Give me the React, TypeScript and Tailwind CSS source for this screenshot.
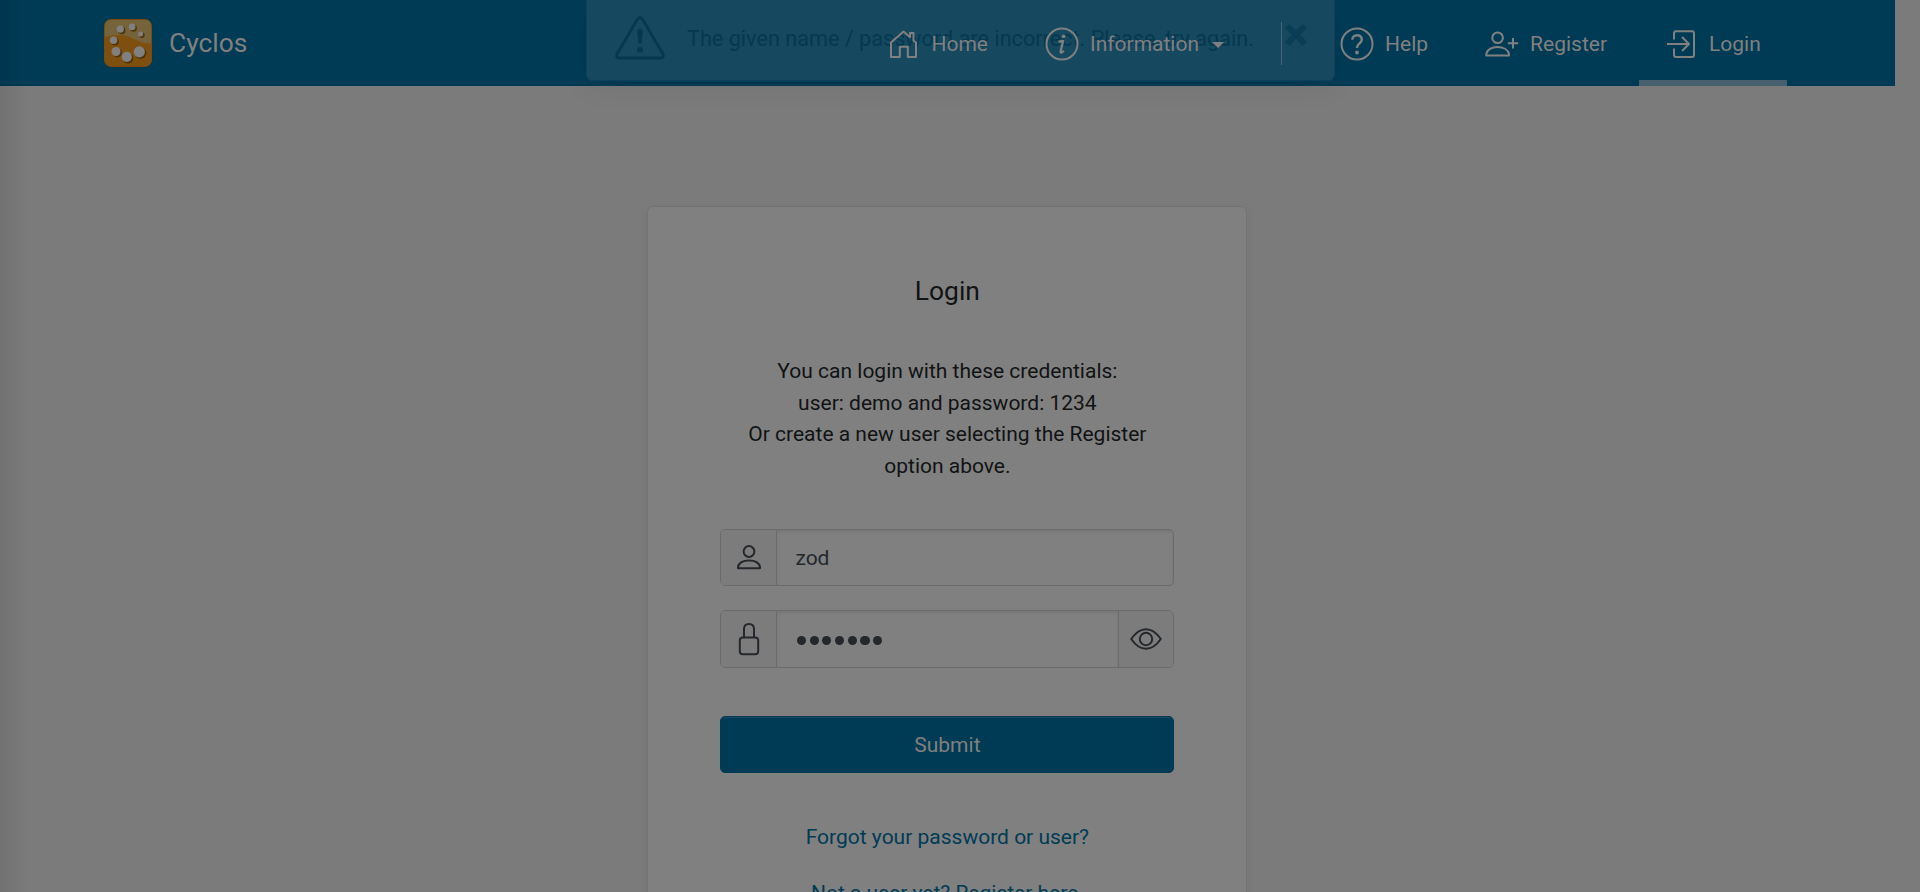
import React from "react";

type IconProps = { className?: string };

function Stroke({ className, children, box = "0 0 34 34" }: IconProps & { children: React.ReactNode; box?: string }) {
  return (
    <svg viewBox={box} className={className} fill="none" stroke="currentColor" strokeWidth="2" strokeLinejoin="round">
      {children}
    </svg>
  );
}

const beads = [
  [16.7, 10.5, 4],
  [28.5, 8.3, 3.7],
  [37, 15.3, 2.9],
  [10, 21.6, 4.1],
  [12.4, 32.9, 4.9],
  [23.2, 38.3, 5.5],
  [35.7, 33.3, 6],
];

const Logo = () => (
  <svg viewBox="0 0 48 48" className="h-12 w-12 shrink-0">
    <rect x="0.5" y="0.5" width="47" height="47" rx="6.5" fill="#7f4f10" stroke="#7f480c" />
    <path d="M1 18V7Q1 1 7 1H41Q47 1 47 7V24.5C33 25 29 16 15 16Q7 16 1 18Z" fill="#75633b" />
    {beads.map(([x, y, r]) => (
      <g key={x}>
        <circle cx={x + 0.9} cy={y + 0.9} r={r - 0.2} fill="#513308" />
        <circle cx={x - 0.4} cy={y - 0.4} r={r - 0.4} fill="#808080" />
      </g>
    ))}
  </svg>
);

export default function App() {
  return (
    <div className="relative flex h-[892px] w-full overflow-hidden bg-[#7b7b7b] font-[Roboto,sans-serif] text-[21px] leading-[31.65px] text-[#111314]">
      <div className="flex w-[1895px] flex-col">
        <header className="relative flex h-[86px] w-full shrink-0 bg-[#003b55] pr-[108px] pl-[104px] text-[#808080]">
          <div className="absolute top-0 left-[586px] flex h-[81px] w-[749px] rounded-b-[6px] border border-t-0 border-[#114159] bg-[#16485f] pt-[14px] pl-[28px] text-[#063850] shadow-[0_8px_28px_rgba(0,0,0,0.06)]">
            <Stroke className="mt-[2px] h-[44px] w-[50px] shrink-0" box="0 0 50 44">
              <path d="M22.6 3Q25 0 27.4 3L48 38Q49 42 46 42H4Q1 42 2 38Z" strokeWidth="2.8" />
              <path d="M22.3 15Q22.5 12.5 25 12.5T27.7 15L26.6 27Q25 29 23.4 27Z" fill="currentColor" stroke="none" />
              <circle cx="25" cy="33.8" r="3" fill="currentColor" stroke="none" />
            </Stroke>
            <span className="mt-[9px] ml-[22px] text-[21.65px] whitespace-nowrap">The given name / password are incorrect. Please, try again.</span>
            <Stroke className="mt-[9px] mr-[26px] ml-auto h-[24px] w-[24px] shrink-0 text-[#0a3d56]" box="0 0 24 24">
              <path d="M3.2 3.2L20.8 20.8M20.8 3.2L3.2 20.8" strokeWidth="6" />
            </Stroke>
          </div>
          <div className="flex items-center gap-[17px]">
            <Logo />
            <span className="pt-[2px] text-[26.4px]">Cyclos</span>
          </div>
          <nav className="relative ml-auto flex h-full items-center">
            <a className="flex h-full items-center gap-[14px] pt-[3px]">
              <Stroke className="-mt-[2px] h-[28px] w-[27px]" box="0 0 27 28">
                <path d="M1 12.5L13.5 1.5L20 7.2V3H23.5V10.5L26 12.5V27H17.8V16.8H9.8V27H1Z" />
              </Stroke>
              Home
            </a>
            <a className="ml-[57px] flex h-full items-center gap-[11px] pt-[3px]">
              <Stroke className="-mt-px h-[34px] w-[34px]">
                <circle cx="17" cy="17" r="15.5" />
                <path d="M13.5 14.7L18.2 13.8L15.6 24.3Q15.3 26 16.5 25.6Q17.6 25.2 18.8 23.8" strokeWidth="2.2" />
                <circle cx="18.6" cy="9.3" r="1.9" fill="currentColor" stroke="none" />
              </Stroke>
              Information
              <span className="ml-[2px] border-x-[6px] border-t-[6px] border-x-transparent" />
            </a>
            <span className="mr-[58px] ml-[57px] h-[43px] w-px bg-[#426579]" />
            <a className="flex h-full items-center gap-[11px] pt-[3px]">
              <Stroke className="-mt-px h-[34px] w-[34px]">
                <circle cx="17" cy="17" r="15.5" />
                <path d="M12.3 12.8C12.3 6.8 21.8 6.8 21.8 12.5C21.8 16.5 17 16.5 17 21" strokeWidth="2.4" />
                <circle cx="17" cy="25.5" r="1.9" fill="currentColor" stroke="none" />
              </Stroke>
              Help
            </a>
            <a className="ml-[57px] flex h-full items-center gap-[11px] pt-[3px]">
              <Stroke className="-mt-px h-[34px] w-[34px]">
                <circle cx="12.6" cy="10.8" r="5.3" />
                <path d="M1.3 28.5V27C2 22.5 7 20 12.5 20S23 22.5 24 27V28.5Z" />
                <path d="M28 11V21.4M22.9 16.2H33.2" />
              </Stroke>
              Register
            </a>
            <a className="ml-[32px] flex h-full w-[148px] items-center gap-[13px] border-b-[6px] border-[#46606d] pt-[9px] pl-[27px]">
              <Stroke className="-mt-[2px] h-[30px] w-[30px]" box="0 0 30 30">
                <path d="M8 10.5V4.3Q8 2.3 10 2.3H26Q28 2.3 28 4.3V26Q28 28 26 28H10Q8 28 8 26V19.5M1 15H23M16 8L23 15L16 22" />
              </Stroke>
              <span className="text-[#808080]">Login</span>
            </a>
          </nav>
        </header>
        <main className="mt-[120px] ml-[647.4px] flex h-[760px] w-[600px] shrink-0 flex-col rounded-[6px] border border-[#737373] bg-[#808080] px-[72px] pt-[69px] text-center shadow-[0_2px_8px_rgba(0,0,0,0.06)]">
          <h1 className="text-[26.4px]">Login</h1>
          <p className="mt-[48.4px]">
            You can login with these credentials:
            <br />
            user: demo and password: 1234
            <br />
            Or create a new user selecting the Register
            <br />
            option above.
          </p>
          <div className="mt-[46.1px] flex h-[57px] shrink-0 overflow-hidden rounded-[5px] border border-[#696c6f] text-[#24282c]">
            <span className="flex w-[56px] shrink-0 items-center justify-center border-r border-[#696c6f] bg-[#7c7c7d]">
              <Stroke className="h-[26px] w-[26px]" box="0 0 26 26">
                <circle cx="13" cy="7.5" r="5.4" />
                <path d="M2 24.3V23C3 18.5 8 16.6 13 16.6S23 18.5 24 23V24.3Z" />
              </Stroke>
            </span>
            <input className="min-w-0 flex-1 px-[18px] pt-[4px] shadow-[inset_0_2px_3px_rgba(0,0,0,0.08)] outline-none" defaultValue="zod" />
          </div>
          <div className="mt-[24px] flex h-[58px] shrink-0 overflow-hidden rounded-[5px] border border-[#696c6f] text-[#24282c]">
            <span className="flex w-[56px] shrink-0 items-center justify-center border-r border-[#696c6f] bg-[#7c7c7d]">
              <Stroke className="h-[34px] w-[22px]" box="0 0 22 34">
                <rect x="1.8" y="15.6" width="18.4" height="16.6" rx="3" />
                <path d="M6 15.6V7Q6 2 11 2T16 7V15.6" />
              </Stroke>
            </span>
            <span className="flex min-w-0 flex-1 items-center gap-[3.5px] pt-[4px] pl-[19.5px] shadow-[inset_0_2px_3px_rgba(0,0,0,0.08)]">
              {[0, 1, 2, 3, 4, 5, 6].map((i) => (
                <span key={i} className="h-[9.2px] w-[9.2px] rounded-full bg-[#24282c]" />
              ))}
            </span>
            <span className="flex w-[55px] shrink-0 items-center justify-center border-l border-[#696c6f] bg-[#7c7c7d]">
              <Stroke className="h-[22px] w-[32px]" box="0 0 32 22">
                <path d="M1.2 11Q8 1.2 16 1.2T30.8 11Q24 20.8 16 20.8T1.2 11Z" />
                <circle cx="16" cy="11" r="6.2" />
              </Stroke>
            </span>
          </div>
          <button className="mt-[48px] h-[57px] shrink-0 rounded-[5px] border border-[#003b55] bg-[#003b55] pt-[3px] text-[#808080] shadow-[inset_0_1px_0_rgba(255,255,255,0.08)]">Submit</button>
          <a className="mt-[49px] text-[#003b55]">Forgot your password or user?</a>
          <a className="mt-[25px] text-[#003b55]">Not a user yet? Register here.</a>
        </main>
      </div>
      <div className="pointer-events-none absolute inset-y-0 left-0 w-[30px] bg-linear-to-r from-black/8 to-transparent" />
    </div>
  );
}
